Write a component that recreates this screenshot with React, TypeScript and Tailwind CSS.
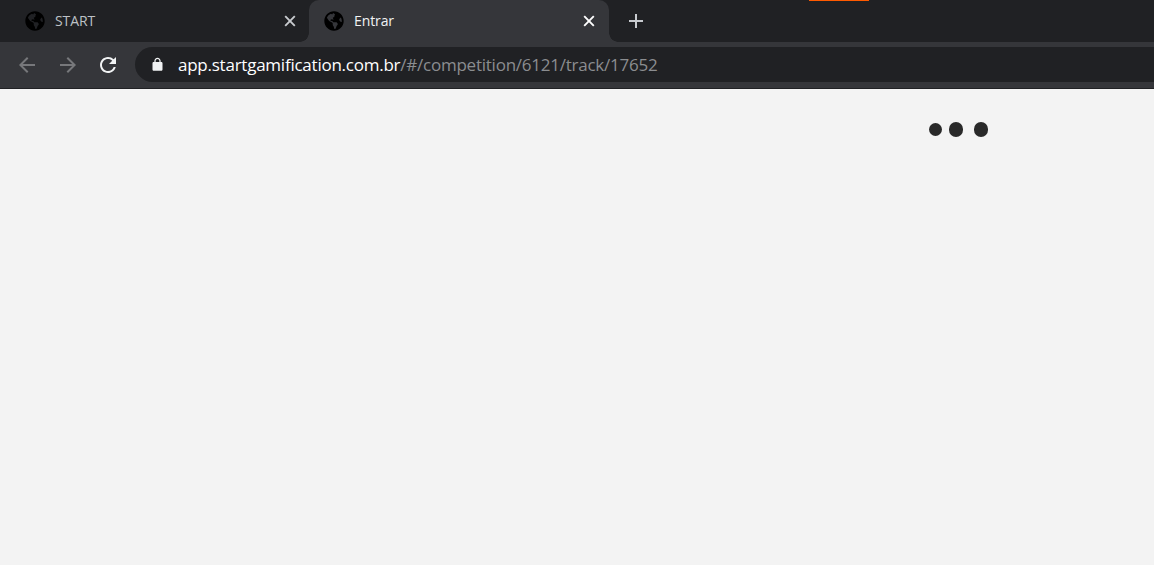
import { FaGlobeAmericas } from "react-icons/fa";

const uiFont = "font-['Open_Sans','Noto_Sans',sans-serif]";

const Tab = ({
  title,
  active,
}: {
  title: string;
  active?: boolean;
}) => {
  return (
    <div
      className={
        active
          ? "relative flex h-[42px] w-[300px] items-center rounded-t-[10px] bg-[#35363a] pl-[15px] pr-[14px]"
          : "relative flex h-[42px] w-[299px] items-center pl-[15px] pr-[13px]"
      }
    >
      {active && (
        <>
          <div className="absolute bottom-0 -left-[9px] h-[9px] w-[9px] bg-[radial-gradient(circle_at_0_0,#202124_8.5px,#35363a_9px)]" />
          <div className="absolute bottom-0 -right-[9px] h-[9px] w-[9px] bg-[radial-gradient(circle_at_100%_0,#202124_8.5px,#35363a_9px)]" />
        </>
      )}
      <FaGlobeAmericas className="h-5 w-5 shrink-0 text-black" />
      <span
        className={
          active
            ? "ml-[10px] flex-1 pb-[2px] text-[14px] tracking-[-0.1px] text-[#f1f3f4]"
            : "ml-[10px] flex-1 pb-[2px] text-[14px] tracking-[-0.1px] text-[#bdc1c6]"
        }
      >
        {title}
      </span>
      <svg
        viewBox="0 0 12 12"
        className={active ? "h-3 w-3 text-white" : "h-3 w-3 text-[#c8cbcf]"}
        fill="none"
        stroke="currentColor"
        strokeWidth="1.9"
      >
        <path d="M1.2 1.2l9.6 9.6M10.8 1.2l-9.6 9.6" />
      </svg>
    </div>
  );
};

const NavIcon = ({ d, className }: { d: string; className: string }) => {
  return (
    <svg viewBox="0 0 24 24" className={className} fill="currentColor">
      <path d={d} />
    </svg>
  );
};

const arrowLeft = "M20 11H7.83l5.59-5.59L12 4l-8 8 8 8 1.41-1.41L7.83 13H20v-2z";
const arrowRight = "M4 11h12.17l-5.59-5.59L12 4l8 8-8 8-1.41-1.41L16.17 13H4v-2z";
const reload =
  "M17.65 6.35A7.958 7.958 0 0 0 12 4c-4.42 0-7.99 3.58-7.99 8s3.57 8 7.99 8c3.73 0 6.84-2.55 7.73-6h-2.08A5.99 5.99 0 0 1 12 18c-3.31 0-6-2.69-6-6s2.69-6 6-6c1.66 0 3.14.69 4.22 1.78L13 11h7V4l-2.35 2.35z";
const lock =
  "M18 8h-1V6c0-2.76-2.24-5-5-5S7 3.24 7 6v2H6c-1.1 0-2 .9-2 2v10c0 1.1.9 2 2 2h12c1.1 0 2-.9 2-2V10c0-1.1-.9-2-2-2zM9 6c0-1.66 1.34-3 3-3s3 1.34 3 3v2H9V6z";

export default function App() {
  return (
    <div className={`flex h-[565px] w-[1154px] flex-col overflow-hidden bg-[#f3f3f3] ${uiFont}`}>
      <div className="relative flex h-[42px] items-center bg-[#202124] pl-[10px]">
        <div className="absolute top-0 left-[809px] h-px w-[60px] bg-[#ff5a00]" />
        <Tab title="START" />
        <Tab title="Entrar" active />
        <svg
          viewBox="0 0 16 16"
          className="ml-[19px] h-4 w-4 text-[#c8cbcf]"
          fill="none"
          stroke="currentColor"
          strokeWidth="2"
        >
          <path d="M8 1v14M1 8h14" />
        </svg>
      </div>

      <div className="flex h-[47px] items-start border-b border-[#202124] bg-[#35363a] pt-[5px]">
        <div className="flex h-[35px] items-center pl-[15px]">
          <NavIcon d={arrowLeft} className="h-6 w-6 text-[#77787b]" />
          <NavIcon d={arrowRight} className="ml-[17px] h-6 w-6 text-[#77787b]" />
          <NavIcon d={reload} className="ml-[16px] h-6 w-6 text-[#f1f3f4]" />
        </div>
        <div className="ml-[15px] flex h-[35px] flex-1 items-center rounded-l-full bg-[#202124] pl-[15px]">
          <NavIcon d={lock} className="h-[15px] w-[15px] text-[#f1f3f4]" />
          <p className="ml-[13px] text-[17px] tracking-[-0.24px] whitespace-nowrap text-white">
            app.startgamification.com.br
            <span className="text-[#8b8d90]">/#/competition/6121/track/17652</span>
          </p>
        </div>
      </div>

      <main className="flex items-center pt-[33px] pl-[929px]">
        <div className="h-[13px] w-[12.5px] rounded-full bg-[#292929]" />
        <div className="ml-[7.5px] h-[15px] w-[13.5px] rounded-full bg-[#292929]" />
        <div className="ml-[11.5px] h-[15px] w-[13.5px] rounded-full bg-[#292929]" />
      </main>
    </div>
  );
}
